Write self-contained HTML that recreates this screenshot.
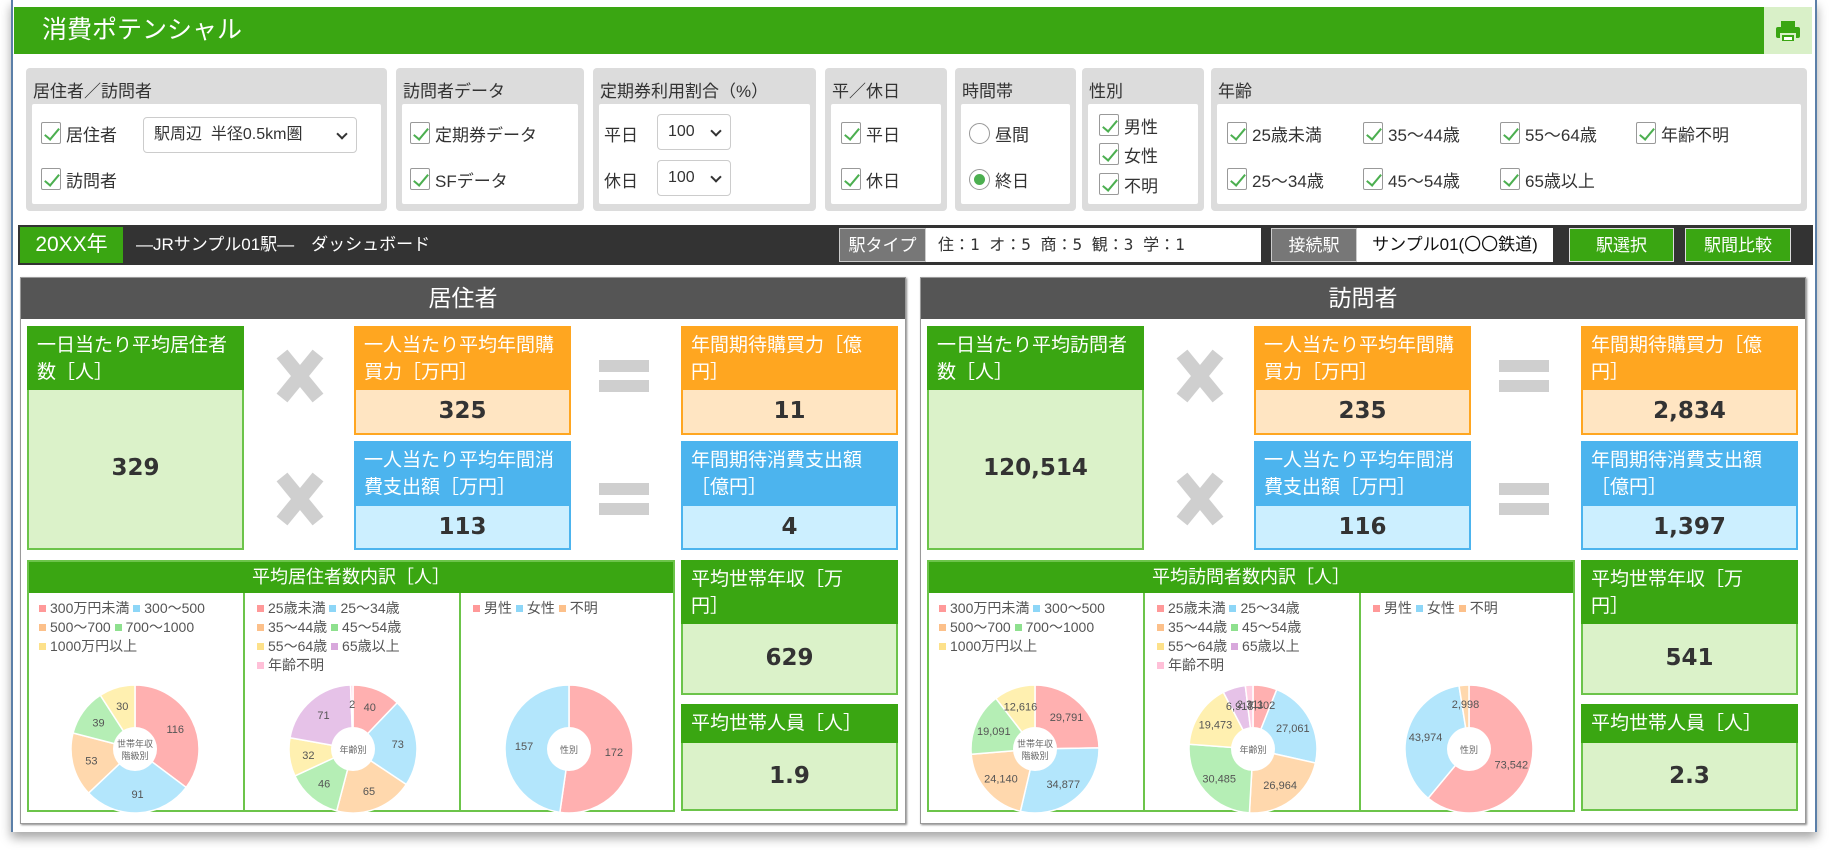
<!DOCTYPE html>
<html><head><meta charset="utf-8">
<style>
*{box-sizing:border-box;margin:0;padding:0}
body{width:1838px;height:851px;background:#fff;font-family:"Liberation Sans","Noto Sans CJK JP",sans-serif;color:#333;position:relative;overflow:hidden}
.abs{position:absolute}
#frame{left:11px;top:0;width:1806px;height:832px;border-left:2px solid #5b7fa8;border-right:2px solid #5b7fa8;box-shadow:0 6px 10px rgba(0,0,0,.35);background:#fff}
#hdr{left:14px;top:7px;width:1750px;height:47px;background:#3aa612;color:#fff;font-size:25px;line-height:47px;padding-left:28px}
#prt{left:1764px;top:7px;width:48px;height:47px;background:#d9f0c8}
.grp{position:absolute;top:68px;height:143px;background:#dcdcdc;border-radius:4px}
.grp .lb{position:absolute;left:7px;top:9px;font-size:17px;color:#333}
.grp .in{position:absolute;left:6px;right:6px;top:36px;bottom:7px;background:#fff;border-radius:2px}
.it{position:absolute;font-size:17px;display:flex;align-items:center;height:24px}
.cb{display:inline-block;width:20px;height:22px;border:1px solid #999;border-radius:2px;margin-right:5px;position:relative;background:#fff}
.cb:after{content:"";position:absolute;left:6px;top:2px;width:6px;height:13px;border:solid #4caf50;border-width:0 2px 2px 0;transform:rotate(40deg)}
.rd{display:inline-block;width:21px;height:21px;border:1px solid #999;border-radius:50%;margin-right:5px;position:relative;background:#fff}
.rd.on:after{content:"";position:absolute;left:4px;top:4px;width:11px;height:11px;border-radius:50%;background:#4caf50}
.sel{position:absolute;border:1px solid #ccc;border-radius:4px;font-size:16px;padding-left:10px;line-height:34px;height:36px;background:#fff}
.sel:after{content:"";position:absolute;right:10px;top:12px;width:6px;height:6px;border:solid #333;border-width:0 2px 2px 0;transform:rotate(45deg)}
#bar{left:18px;top:225px;width:1795px;height:40px;background:#333}
.bx{position:absolute;top:3px;height:34px;line-height:34px;font-size:17px;text-align:center}
.panel{position:absolute;top:277px;width:886px;height:547px;border:1px solid #999;background:#fff;box-shadow:1px 1px 2px #888}
.ph{position:absolute;left:0;top:0;right:0;height:41px;background:#555;color:#fff;font-size:23px;text-align:center;line-height:41px}
.card{position:absolute;width:217px}
.ct{color:#fff;font-size:19px;line-height:27px;padding:6px 10px 0;white-space:nowrap}
.cv{font-weight:bold;font-size:23px;text-align:center;font-family:"DejaVu Sans","Liberation Sans",sans-serif;color:#333}
.g .ct{background:#3aa612}.g .cv{background:#dbf2c9;border:2px solid #6cc44a;border-top:none}
.o .ct{background:#ffa620}.o .cv{background:#ffe5c2;border:2px solid #ffa620;border-top:none}
.b .ct{background:#4cb4ee}.b .cv{background:#ccefff;border:2px solid #4cb4ee;border-top:none}
.brk{position:absolute;left:6px;top:282px;width:648px;height:252px;border:2px solid #6cc44a}
.brk .h{height:31px;background:#3aa612;color:#fff;font-size:18px;text-align:center;line-height:31px}
.col{position:absolute;top:31px;bottom:0;width:216px;border-left:2px solid #6cc44a}
.lg{position:absolute;left:12px;top:6px;font-size:14px;color:#555;line-height:19px;width:205px}
.lg i{display:inline-block;width:7px;height:7px;margin:0 4px 0 0;vertical-align:1px}
</style></head><body>
<div id="frame" class="abs"></div>
<div id="hdr" class="abs">消費ポテンシャル</div>
<div id="prt" class="abs"><svg width="48" height="47" viewBox="0 0 48 47"><rect x="17" y="14" width="14" height="6" fill="#3aa612"/><rect x="12" y="20" width="24" height="11" rx="2" fill="#3aa612"/><rect x="17" y="27" width="14" height="8" fill="#3aa612" stroke="#d9f0c8" stroke-width="2"/><rect x="20" y="30" width="8" height="3" fill="#fff"/></svg></div>

<div class="grp" style="left:26px;width:361px"><div class="lb">居住者／訪問者</div><div class="in"></div>
<div class="it" style="left:15px;top:53px"><span class="cb"></span>居住者</div>
<div class="sel" style="left:117px;top:49px;width:214px">駅周辺&nbsp;&nbsp;半径0.5km圏</div>
<div class="it" style="left:15px;top:99px"><span class="cb"></span>訪問者</div></div>

<div class="grp" style="left:396px;width:188px"><div class="lb">訪問者データ</div><div class="in"></div>
<div class="it" style="left:14px;top:53px"><span class="cb"></span>定期券データ</div>
<div class="it" style="left:14px;top:99px"><span class="cb"></span>SFデータ</div></div>

<div class="grp" style="left:593px;width:223px"><div class="lb">定期券利用割合（%）</div><div class="in"></div>
<div class="it" style="left:11px;top:53px">平日</div><div class="sel" style="left:64px;top:46px;width:74px">100</div>
<div class="it" style="left:11px;top:99px">休日</div><div class="sel" style="left:64px;top:92px;width:74px">100</div></div>

<div class="grp" style="left:825px;width:122px"><div class="lb">平／休日</div><div class="in"></div>
<div class="it" style="left:16px;top:53px"><span class="cb"></span>平日</div>
<div class="it" style="left:16px;top:99px"><span class="cb"></span>休日</div></div>

<div class="grp" style="left:955px;width:121px"><div class="lb">時間帯</div><div class="in"></div>
<div class="it" style="left:14px;top:53px"><span class="rd"></span>昼間</div>
<div class="it" style="left:14px;top:99px"><span class="rd on"></span>終日</div></div>

<div class="grp" style="left:1082px;width:122px"><div class="lb">性別</div><div class="in"></div>
<div class="it" style="left:17px;top:45px"><span class="cb"></span>男性</div>
<div class="it" style="left:17px;top:74px"><span class="cb"></span>女性</div>
<div class="it" style="left:17px;top:104px"><span class="cb"></span>不明</div></div>

<div class="grp" style="left:1211px;width:596px"><div class="lb">年齢</div><div class="in"></div>
<div class="it" style="left:16px;top:53px"><span class="cb"></span>25歳未満</div>
<div class="it" style="left:152px;top:53px"><span class="cb"></span>35～44歳</div>
<div class="it" style="left:289px;top:53px"><span class="cb"></span>55～64歳</div>
<div class="it" style="left:425px;top:53px"><span class="cb"></span>年齢不明</div>
<div class="it" style="left:16px;top:99px"><span class="cb"></span>25～34歳</div>
<div class="it" style="left:152px;top:99px"><span class="cb"></span>45～54歳</div>
<div class="it" style="left:289px;top:99px"><span class="cb"></span>65歳以上</div></div>

<div id="bar" class="abs">
<div class="bx" style="left:2px;top:2px;height:36px;line-height:36px;width:103px;background:#3aa612;color:#fff;font-size:21px">20XX年</div>
<div class="bx" style="left:118px;color:#fff;text-align:left">—JRサンプル01駅—　ダッシュボード</div>
<div class="bx" style="left:821px;width:87px;background:#777;color:#fff;border:1px solid #ccc">駅タイプ</div>
<div class="bx" style="left:908px;width:335px;background:#fff;color:#333;font-family:'DejaVu Sans Mono','Noto Sans CJK JP',monospace;font-size:16px;text-align:left;padding-left:12px">住：1 オ：5 商：5 観：3 学：1</div>
<div class="bx" style="left:1253px;width:86px;background:#777;color:#fff;border:1px solid #ccc">接続駅</div>
<div class="bx" style="left:1339px;width:196px;background:#fff;color:#111">サンプル01(〇〇鉄道)</div>
<div class="bx" style="left:1551px;width:105px;background:#3aa612;color:#fff;border:1px solid #ddd">駅選択</div>
<div class="bx" style="left:1667px;width:106px;background:#3aa612;color:#fff;border:1px solid #ddd">駅間比較</div>
</div>

<div class="panel" style="left:20px" id="p1"><div class="ph">居住者</div>
<div class="card g" style="left:6px;top:48px"><div class="ct" style="height:64px">一日当たり平均居住者<br>数［人］</div><div class="cv" style="height:160px;line-height:156px">329</div></div>
<div class="card o" style="left:333px;top:48px"><div class="ct" style="height:64px">一人当たり平均年間購<br>買力［万円］</div><div class="cv" style="height:45px;line-height:43px">325</div></div>
<div class="card b" style="left:333px;top:163px"><div class="ct" style="height:65px">一人当たり平均年間消<br>費支出額［万円］</div><div class="cv" style="height:44px;line-height:42px">113</div></div>
<div class="card o" style="left:660px;top:48px"><div class="ct" style="height:64px">年間期待購買力［億<br>円］</div><div class="cv" style="height:45px;line-height:43px">11</div></div>
<div class="card b" style="left:660px;top:163px"><div class="ct" style="height:65px">年間期待消費支出額<br>［億円］</div><div class="cv" style="height:44px;line-height:42px">4</div></div>
<div class="brk"><div class="h">平均居住者数内訳［人］</div>
<div class="col" style="left:-2px;border-left:none"></div><div class="col" style="left:214px"></div><div class="col" style="left:430px"></div></div>
<div class="card g" style="left:660px;top:282px"><div class="ct" style="height:64px">平均世帯年収［万<br>円］</div><div class="cv" style="height:71px;line-height:69px">629</div></div>
<div class="card g" style="left:660px;top:426px"><div class="ct" style="height:39px">平均世帯人員［人］</div><div class="cv" style="height:68px;line-height:66px">1.9</div></div>
</div>

<div class="panel" style="left:920px" id="p2"><div class="ph">訪問者</div>
<div class="card g" style="left:6px;top:48px"><div class="ct" style="height:64px">一日当たり平均訪問者<br>数［人］</div><div class="cv" style="height:160px;line-height:156px">120,514</div></div>
<div class="card o" style="left:333px;top:48px"><div class="ct" style="height:64px">一人当たり平均年間購<br>買力［万円］</div><div class="cv" style="height:45px;line-height:43px">235</div></div>
<div class="card b" style="left:333px;top:163px"><div class="ct" style="height:65px">一人当たり平均年間消<br>費支出額［万円］</div><div class="cv" style="height:44px;line-height:42px">116</div></div>
<div class="card o" style="left:660px;top:48px"><div class="ct" style="height:64px">年間期待購買力［億<br>円］</div><div class="cv" style="height:45px;line-height:43px">2,834</div></div>
<div class="card b" style="left:660px;top:163px"><div class="ct" style="height:65px">年間期待消費支出額<br>［億円］</div><div class="cv" style="height:44px;line-height:42px">1,397</div></div>
<div class="brk"><div class="h">平均訪問者数内訳［人］</div>
<div class="col" style="left:-2px;border-left:none"></div><div class="col" style="left:214px"></div><div class="col" style="left:430px"></div></div>
<div class="card g" style="left:660px;top:282px"><div class="ct" style="height:64px">平均世帯年収［万<br>円］</div><div class="cv" style="height:71px;line-height:69px">541</div></div>
<div class="card g" style="left:660px;top:426px"><div class="ct" style="height:39px">平均世帯人員［人］</div><div class="cv" style="height:68px;line-height:66px">2.3</div></div>
</div>

<script>
var C={p:'#ffb0b0',b:'#b3e6fc',o:'#ffd8ad',g:'#b5eeb5',y:'#fff0b0',v:'#e6c2e8',k:'#ffd0e2'};
var L1='<i style="background:#f99"></i>300万円未満 <i style="background:#8dd6f7"></i>300～500<br><i style="background:#fcc08a"></i>500～700 <i style="background:#8ee08e"></i>700～1000<br><i style="background:#fde18a"></i>1000万円以上';
var L2='<i style="background:#f99"></i>25歳未満 <i style="background:#8dd6f7"></i>25～34歳<br><i style="background:#fcc08a"></i>35～44歳 <i style="background:#8ee08e"></i>45～54歳<br><i style="background:#fde18a"></i>55～64歳 <i style="background:#d8a8dc"></i>65歳以上<br><i style="background:#ffc0d8"></i>年齢不明';
var L3='<i style="background:#f99"></i>男性 <i style="background:#8dd6f7"></i>女性 <i style="background:#fcc08a"></i>不明';
function donut(vals,labs,cols,center){
 var cx=108,cy=156,R=64,r=22,t=0,s=0,i,out='<svg width="214" height="220" style="position:absolute;left:0;top:0">';
 vals.forEach(function(v){t+=v});
 for(i=0;i<vals.length;i++){var a0=s/t*2*Math.PI,a1=(s+vals[i])/t*2*Math.PI;s+=vals[i];
  if(vals[i]==0)continue;
  var x0=cx+R*Math.sin(a0),y0=cy-R*Math.cos(a0),x1=cx+R*Math.sin(a1),y1=cy-R*Math.cos(a1),lg=(a1-a0)>Math.PI?1:0;
  out+='<path d="M'+cx+','+cy+' L'+x0+','+y0+' A'+R+','+R+' 0 '+lg+' 1 '+x1+','+y1+' Z" fill="'+cols[i]+'" stroke="#fff" stroke-width="1.5"/>';}
 out+='<circle cx="'+cx+'" cy="'+cy+'" r="'+r+'" fill="#fff"/>';
 s=0;for(i=0;i<vals.length;i++){var am=(s+vals[i]/2)/t*2*Math.PI;s+=vals[i];if(vals[i]==0)continue;
  out+='<text x="'+(cx+45*Math.sin(am))+'" y="'+(cy-45*Math.cos(am)+4)+'" font-size="11" fill="#555" text-anchor="middle">'+labs[i]+'</text>';}
 center.forEach(function(c,j){out+='<text x="'+cx+'" y="'+(cy+4-(center.length-1)*6+j*12)+'" font-size="9" fill="#666" text-anchor="middle">'+c+'</text>';});
 return out+'</svg>';}
var D={p1:[[[116,91,53,39,30],['116','91','53','39','30'],[C.p,C.b,C.o,C.g,C.y],['世帯年収','階級別']],
 [[40,73,65,46,32,71,2],['40','73','65','46','32','71','2'],[C.p,C.b,C.o,C.g,C.y,C.v,C.k],['年齢別']],
 [[172,157,0],['172','157',''],[C.p,C.b,C.o],['性別']]],
 p2:[[[29791,34877,24140,19091,12616],['29,791','34,877','24,140','19,091','12,616'],[C.p,C.b,C.o,C.g,C.y],['世帯年収','階級別']],
 [[7302,27061,26964,30485,19473,6918,2311],['7,302','27,061','26,964','30,485','19,473','6,918','2,311'],[C.p,C.b,C.o,C.g,C.y,C.v,C.k],['年齢別']],
 [[73542,43974,2998],['73,542','43,974','2,998'],[C.p,C.b,C.o],['性別']]]};
var LG=[L1,L2,L3];
['p1','p2'].forEach(function(p){var cols=document.querySelectorAll('#'+p+' .col');
 for(var k=0;k<3;k++){var d=D[p][k];cols[k].innerHTML=donut(d[0],d[1],d[2],d[3])+'<div class="lg">'+LG[k]+'</div>';}
 var P=document.getElementById(p);
 [[279,98],[279,221]].forEach(function(q){P.insertAdjacentHTML('beforeend','<svg class="abs" style="left:'+(q[0]-28)+'px;top:'+(q[1]-30)+'px" width="56" height="60"><path d="M10,8 L46,52 M46,8 L10,52" stroke="#cfcfcf" stroke-width="14"/></svg>');});
 [[603,98],[603,221]].forEach(function(q){P.insertAdjacentHTML('beforeend','<div class="abs" style="left:'+(q[0]-25)+'px;top:'+(q[1]-16)+'px;width:50px;height:12px;background:#cfcfcf"></div><div class="abs" style="left:'+(q[0]-25)+'px;top:'+(q[1]+4)+'px;width:50px;height:12px;background:#cfcfcf"></div>');});
});
</script>
</body></html>
